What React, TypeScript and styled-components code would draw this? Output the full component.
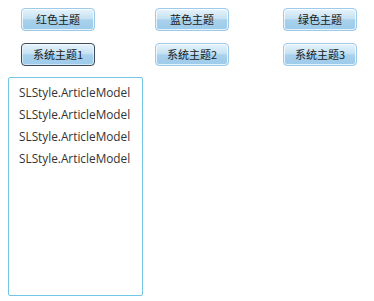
import React from "react";
import styled, { createGlobalStyle, css } from "styled-components";

const GlobalStyle = createGlobalStyle`
  html, body {
    margin: 0;
    padding: 0;
    background: #ffffff;
  }
  body {
    font-family: "Liberation Sans", "Noto Sans CJK SC", sans-serif;
  }
`;

const Page = styled.div`
  width: 374px;
  height: 301px;
  position: relative;
  box-sizing: border-box;
  padding: 8px 0 0 8px;
`;

const ButtonGrid = styled.div`
  display: grid;
  grid-template-columns: 134px 128px 74px;
  row-gap: 12px;
  padding-left: 13px;
`;

const ThemeButton = styled.button<{ $active?: boolean }>`
  width: 74px;
  height: 23px;
  box-sizing: border-box;
  padding: 0;
  border-radius: 4px;
  border: 1px solid #9ccae8;
  background: linear-gradient(
    to bottom,
    #e6f3fb 0%,
    #c6e2f3 45%,
    #a8d1ec 52%,
    #9ccbea 100%
  );
  box-shadow: inset 0 0 0 1px rgba(255, 255, 255, 0.75);
  font-family: "Noto Sans CJK SC", "Liberation Sans", sans-serif;
  font-size: 11px;
  line-height: 21px;
  color: #1a1a1a;
  cursor: pointer;
  ${(p) =>
    p.$active &&
    css`
      border-color: #3c4c5c;
      box-shadow: inset 0 0 0 1px rgba(255, 255, 255, 0.55);
    `}
`;

const ListBox = styled.div`
  margin-top: 11px;
  width: 135px;
  height: 219px;
  box-sizing: border-box;
  border: 1px solid #74c6e6;
  border-radius: 2px;
  padding: 3px 0 0 10px;
`;

const ListItem = styled.div`
  height: 22px;
  line-height: 22px;
  font-family: "Open Sans", "Liberation Sans", sans-serif;
  font-size: 11.8px;
  color: #333333;
  white-space: nowrap;
`;

const themes = [
  { label: "红色主题" },
  { label: "蓝色主题" },
  { label: "绿色主题" },
  { label: "系统主题1", active: true },
  { label: "系统主题2" },
  { label: "系统主题3" },
];

const items = [
  "SLStyle.ArticleModel",
  "SLStyle.ArticleModel",
  "SLStyle.ArticleModel",
  "SLStyle.ArticleModel",
];

export default function App() {
  return (
    <>
      <GlobalStyle />
      <Page>
        <ButtonGrid>
          {themes.map((t) => (
            <ThemeButton key={t.label} $active={t.active}>
              {t.label}
            </ThemeButton>
          ))}
        </ButtonGrid>
        <ListBox>
          {items.map((item, i) => (
            <ListItem key={i}>{item}</ListItem>
          ))}
        </ListBox>
      </Page>
    </>
  );
}
